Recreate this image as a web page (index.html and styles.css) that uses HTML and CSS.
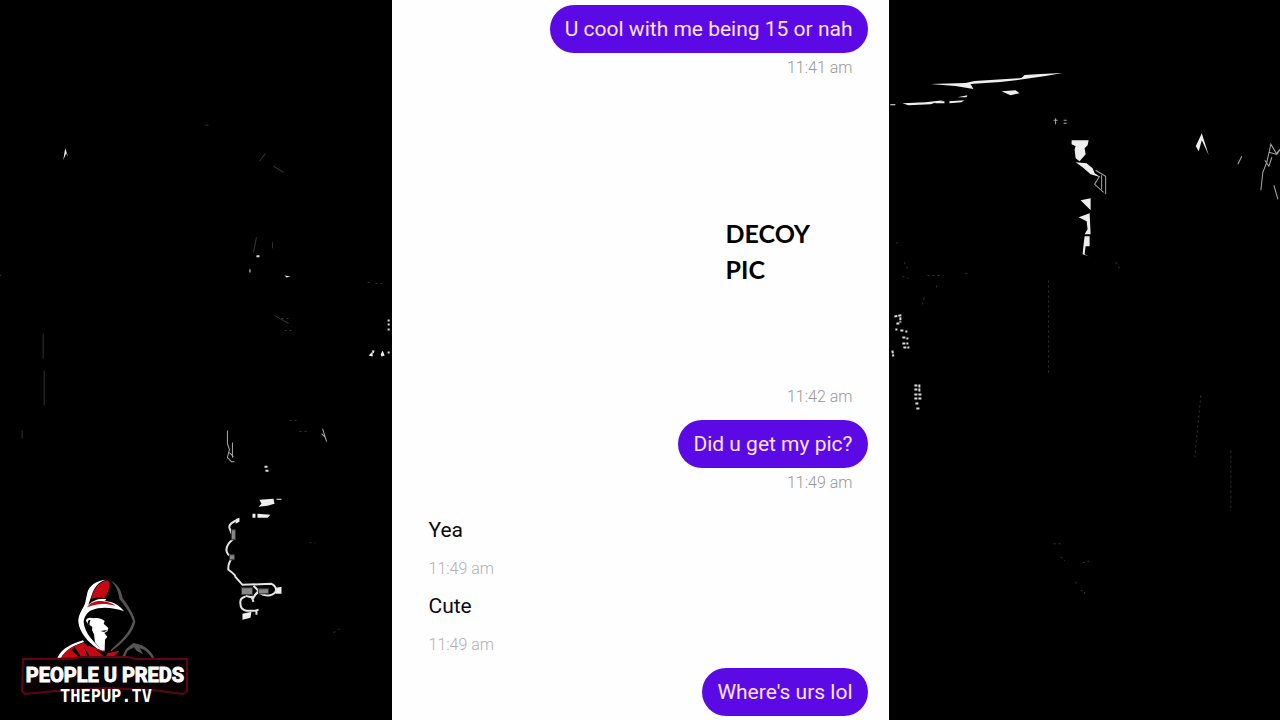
FILE: index.html
```html
<!DOCTYPE html>
<html lang="en">
<head>
<meta charset="utf-8">
<meta name="viewport" content="width=device-width, initial-scale=1">
<title>People U Preds</title>
<link rel="stylesheet" href="styles.css">
</head>
<body>
<div class="stage">
  <svg class="backdrop" viewBox="0 0 1280 720" preserveAspectRatio="xMidYMid slice" aria-hidden="true">
    <g class="bright">
      <path d="M930 84 L965 83 L974 81 L990 80 L1021 78 L1024 75 L1040 74 L1062 73 L1045 76 L1024 79 L1000 82 L970 84 L973 89 L955 86Z"/>
      <path d="M1001 91 L1015 90 L1019 93 L1010 95Z"/>
      <path d="M902 103 L925 102 L943 100 L930 104 L908 105Z M935 101h9v2h-9z M949 101l15-1 -3 2 -12 1z M957 97l10-2 -1 2z M890 104h5v1h-5z"/>
      <path d="M1071 140h17l-1 5-3 3 1 6-6 7-4-3-1-9 1-3-4-2z"/>
      <path d="M1075 162l11 1 6 5 2 5 6 4-10-3-8-7z"/>
      <path d="M1080 200l10-2v12l-4-4z M1078 217l11-4 1 21-6 0 3-5-1-8z M1084 236l5 0v10l-4 0-1 8 4 2-6-2 1-10z"/>
      <path d="M1195 146l6-13 7 22-7-15-3 11z"/>
      <path d="M64 160l2-12 3 9-2-4z"/>
      <path d="M260 499l14-1 1 5-7 2-9 1 3-3z M277 498h5v1h-5z M258 513l13 1-3 3-10 0z M253 513h3v4h-3z M237 518l3-1v4l-4 2z"/>
      <path d="M277 587l5-1v7l-6 0z M243 613l9-2-1 6-8 2z M369 355l4-4v5z M372 350h3l-1 3z M381 354l2-4 2 5-3 1z"/>
      <path d="M285 275l6 1-4 1z M250 269h1v3h-1z"/>
    </g>
    <g class="wire">
      <path d="M238 519q-9 4-8 8l3 8v4q-6 5-6 10t6 7q-5 8-4 13 7 5 7 7l7 8 29-1q6 3 4 8-4 5-12 3-7-5-10 3l-8-2"/>
      <path d="M246 596q-6 1-5 7 0 6 6 7h8l4-1M257 609v5 M252 595l2 6 M254 585l5 5-4 5"/>
    </g>
    <g class="soft">
      <path d="M232 529h4v10h-4z M230 554h5v5h-5z M242 587h11v7h-11z M259 588h10v5h-10z"/>
      <path d="M260 161l6-8 M274 166l10 6 M44 333v25 M45 370v35 M23 430v8 M206 125h3 M257 237l-3 15 M275 315l14 8 M273 242v6"/>
    </g>
    <g class="thin">
      <path d="M228 430v13l2 6-2 8 4 4h3 M233 442v15 M230 452l4 4 M323 428l4 13 M326 437l-4-4"/>
      <path d="M1095 170l10 6v18 M1099 176l-5 8 9 8 M1101 175v14 M1260 190l2-18 4-10 4-18 6 10 4-6 M1264 160l4 6 3-9 M1268 152l7 2 5-6 M1273 185l4 14 M1237 164l4-8"/>
      <path d="M1055 118v6 M1053 120h4 M1063 120h3 M1063 123h3"/>
    </g>
    <g class="specks">
      <path d="M894 316l6-1v7 M896 323h4 M895 329h2 M900 330h3 M905 331h2 M902 337h3 M906 338h2 M902 343h6 M903 347h6 M892 350l1 6"/>
      <path d="M914 385h4 M919 384v8 M914 389h4 M914 394h7 M914 398h7 M915 403h4 M916 408h3"/>
      <path d="M265 466h4 M266 470h4 M388 320h2 M388 324h2 M388 329h2 M257 256h3 M388 352h2"/>
    </g>
    <g class="faint">
      <path d="M896 243l4-3 M904 262l4 8 M902 276l6 2 M922 304l2-7 M927 275h12 M965 273h4 M936 285v2 M1048 280v95 M1200 395l-6 62 M1230 450v58 M1115 262l5 8"/>
      <path d="M1053 543h8 M1060 556l4 4 M1082 562l8-2 M1075 581l2 4 M1080 590h4v4 M340 628l-8 5 M290 420h8 M300 431h8 M310 542h6"/>
      <path d="M282 318h10 M285 330h8 M368 282h4 M376 283h6 M0 275h4"/>
    </g>
  </svg>

  <main class="chat">
    <section class="message sent">
      <p class="bubble">U cool with me being 15 or nah</p>
      <time class="stamp" datetime="11:41">11:41 am</time>
    </section>
    <section class="message sent">
      <figure class="picture">DECOY<br>PIC</figure>
      <time class="stamp" datetime="11:42">11:42 am</time>
    </section>
    <section class="message sent">
      <p class="bubble">Did u get my pic?</p>
      <time class="stamp" datetime="11:49">11:49 am</time>
    </section>
    <section class="message received">
      <p class="line">Yea</p>
      <time class="stamp" datetime="11:49">11:49 am</time>
    </section>
    <section class="message received follow">
      <p class="line">Cute</p>
      <time class="stamp" datetime="11:49">11:49 am</time>
    </section>
    <section class="message sent">
      <p class="bubble">Where's urs lol</p>
    </section>
  </main>

  <svg class="logo" viewBox="0 0 190 150" role="img" aria-label="People U Preds, thepup.tv">
    <g transform="scale(.3333)">
      <path fill="#555" d="M303 30c22 8 32 32 35 52 15 20 31 42 38 69-5 30-26 51-47 70l-25 20-2-4c31-27 57-52 67-86-8-27-28-52-41-67-2-22-10-41-25-54z"/>
      <path fill="#fff" d="M288 26c-31 2-51 19-56 39l-7 33c-7 17-21 33-20 54 3 32 29 61 58 82l21 8c-31-25-61-56-63-89 1-15 12-31 23-35 29-13 67-8 98 3-12-17-31-29-59-31 9-5 8-6-5-7-17 0-33 9-43 18l10-28c8-24 20-41 43-47z"/>
      <path fill="#c50812" d="M287 29c-27 8-35 28-44 55 18-6 31-7 39-2 13-15 18-32 15-49-2-4-6-5-10-4z M231 109c8-13 27-21 49-18 13 1 27 7 36 13-34-9-61-5-85 5z"/>
      <path fill="#fff" d="M228 148c3-8 13-9 23-6 12-3 24 1 33 8l-3 8 14 13-3 10-9 5 9 11-7 9-1 33-10-3-19-22-3-24-6-13 1-9-7-5c-7-3-11-9-12-15z"/>
      <path fill="#000" d="M238 146c-8 5-5 13 1 17-1-8 1-12 3-15z M272 180l20-3-9 6z"/>
      <path fill="#fff" d="M142 260c14-27 40-41 77-52l3 5c-35 12-53 23-68 47z"/>
      <path fill="#c50812" d="M153 260c12-22 35-36 68-45l11 9 14 3 42 16 4 4 37-8-22 22z"/>
      <path fill="#000" d="M194 229l20 29h-8l-22-22z M222 227l19 31h-8z M257 236l35 9-5 15z"/>
      <path fill="#555" d="M335 260l13-26 22-18 16 4c24 8 38 22 47 40h-8c-12-18-22-25-36-28l11 18-20-10-8-11-19 10-10 21z"/>
    </g>
    <path class="plate" d="M13 88h50l8-2h47l8 2h51v32l-4 3-30-4-48-2-50 3-30 3-3-3z"/>
    <text class="brand" x="95" y="111">PEOPLE U PREDS</text>
    <text class="site" x="96" y="131">THEPUP.TV</text>
  </svg>
</div>
</body>
</html>
```
FILE: styles.css
```css
* {
  box-sizing: border-box;
}

body {
  margin: 0;
  background: #000;
  font-family: Roboto, "Liberation Sans", sans-serif;
}

.stage {
  position: relative;
  display: flex;
  justify-content: center;
  min-height: 100vh;
  overflow: hidden;
}

.backdrop {
  position: absolute;
  inset: 0;
  width: 100%;
  height: 100%;
  fill: none;
}

.bright { fill: #eee; }
.wire { stroke: #e4e4e4; stroke-width: 2; }
.soft { stroke: #333; fill: #888; }
.thin { stroke: #aaa; }
.specks { stroke: #ddd; stroke-width: 2; stroke-dasharray: 3 1; }
.faint { stroke: #333; stroke-dasharray: 2 3; }

.chat {
  position: relative;
  display: flex;
  flex-direction: column;
  gap: 13px;
  width: 497px;
  max-width: 100%;
  padding: 5px 21px 5px 37px;
  background: #fefefe;
}

.message {
  display: flex;
  flex-direction: column;
  gap: 5px;
}

.sent { align-items: flex-end; }
.received { align-items: flex-start; }
.follow { margin-top: -10px; }

.bubble,
.line {
  margin: 0;
  padding: 12px 0;
  font-size: 21px;
  line-height: 24px;
  color: #0a0a0a;
}

.bubble {
  padding: 12px 15px;
  border-radius: 24px;
  background: #5b0ae6;
  color: #fbe3ff;
}

.stamp {
  font-size: 16px;
  font-weight: 300;
  line-height: 20px;
  color: #b0b0b0;
}

.sent .stamp {
  padding-right: 15px;
  color: #989898;
}

.picture {
  width: 142px;
  height: 291px;
  margin: 0;
  padding-top: 124px;
  font-family: Lato, sans-serif;
  font-size: 25px;
  font-weight: 700;
  line-height: 36px;
  color: #000;
}

.logo {
  position: absolute;
  left: 10px;
  bottom: 0;
  width: 190px;
  height: 150px;
}

.plate {
  fill: #080103;
  stroke: #5c0613;
  stroke-width: 2;
}

.brand,
.site {
  fill: #fff;
  font-weight: 700;
  text-anchor: middle;
}

.brand {
  stroke: #fff;
  stroke-width: 1;
  font-family: Roboto, sans-serif;
  font-size: 20px;
}

.site {
  font-family: "DejaVu Sans Mono", monospace;
  font-size: 17px;
}
```
